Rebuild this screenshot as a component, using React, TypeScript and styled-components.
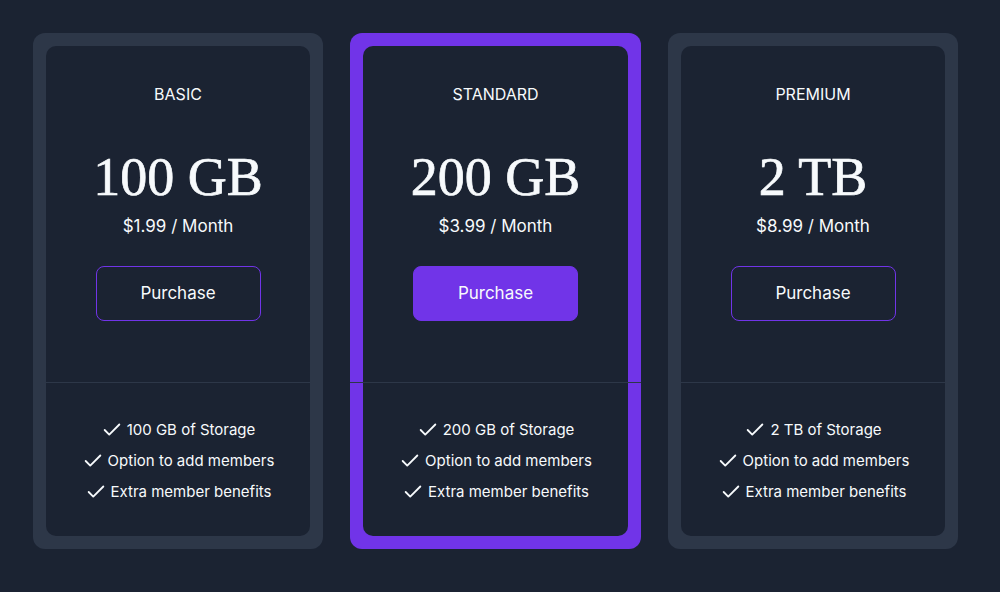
import React from "react";
import styled, { createGlobalStyle } from "styled-components";

const Global = createGlobalStyle`
  html, body { margin: 0; padding: 0; background: #1b2332; }
  body { font-family: Inter, "Noto Sans", sans-serif; color: #f7fafc; }
`;

const Page = styled.div`
  display: flex;
  gap: 27px;
  padding: 33px 0 0 33px;
  min-height: 592px;
  box-sizing: border-box;
  background: #1b2332;
`;

const Frame = styled.div<{ $active?: boolean }>`
  width: ${(p) => (p.$active ? 291 : 290)}px;
  height: 516px;
  box-sizing: border-box;
  padding: 13px;
  border-radius: 12px;
  background: ${(p) => (p.$active ? "#7134e8" : "#2d3748")};
  display: flex;
  flex-direction: column;
`;

const TopPanel = styled.div`
  background: #1b2332;
  border-radius: 10px 10px 0 0;
  height: 336px;
  box-sizing: border-box;
  padding-top: 36px;
  display: flex;
  flex-direction: column;
  align-items: center;
`;

const Divider = styled.div`
  height: 1px;
  margin: 0 -13px;
  background: #2d3748;
`;

const BottomPanel = styled.div`
  flex: 1;
  background: #1b2332;
  border-radius: 0 0 10px 10px;
  padding-top: 31px;
  display: flex;
  flex-direction: column;
  align-items: center;
`;

const Title = styled.div`
  font-size: 16px;
  line-height: 24px;
  font-weight: 400;
`;

const Amount = styled.div`
  margin-top: 44px;
  font-family: "Liberation Serif", "DejaVu Serif", serif;
  font-size: 54px;
  line-height: 54px;
  -webkit-text-stroke: 0.7px #f7fafc;
`;

const Price = styled.div`
  margin-top: 10px;
  font-size: 17px;
  line-height: 24px;
`;

const Button = styled.button<{ $filled?: boolean }>`
  margin-top: 28px;
  width: 165px;
  height: 55px;
  border-radius: 8px;
  border: 1px solid #7134e8;
  background: ${(p) => (p.$filled ? "#7134e8" : "transparent")};
  color: #f7fafc;
  font-family: Inter, "Noto Sans", sans-serif;
  font-size: 17px;
  padding: 0 0 2px;
  cursor: pointer;
`;

const Feature = styled.div`
  display: flex;
  align-items: center;
  gap: 4px;
  font-size: 15px;
  line-height: 31px;
`;

const CheckIcon = () => (
  <svg width="22" height="22" viewBox="0 0 24 24" fill="none" stroke="#f7fafc" strokeWidth="2" strokeLinecap="round" strokeLinejoin="round">
    <path d="M20 6 9 17l-5-5" />
  </svg>
);

type Plan = { name: string; amount: string; price: string; storage: string; active?: boolean };

const plans: Plan[] = [
  { name: "BASIC", amount: "100 GB", price: "$1.99 / Month", storage: "100 GB of Storage" },
  { name: "STANDARD", amount: "200 GB", price: "$3.99 / Month", storage: "200 GB of Storage", active: true },
  { name: "PREMIUM", amount: "2 TB", price: "$8.99 / Month", storage: "2 TB of Storage" },
];

export default function App() {
  return (
    <>
      <Global />
      <Page>
        {plans.map((p) => (
          <Frame key={p.name} $active={p.active}>
            <TopPanel>
              <Title>{p.name}</Title>
              <Amount>{p.amount}</Amount>
              <Price>{p.price}</Price>
              <Button $filled={p.active}>Purchase</Button>
            </TopPanel>
            <Divider />
            <BottomPanel>
              {[p.storage, "Option to add members", "Extra member benefits"].map((f) => (
                <Feature key={f}>
                  <CheckIcon />
                  {f}
                </Feature>
              ))}
            </BottomPanel>
          </Frame>
        ))}
      </Page>
    </>
  );
}
